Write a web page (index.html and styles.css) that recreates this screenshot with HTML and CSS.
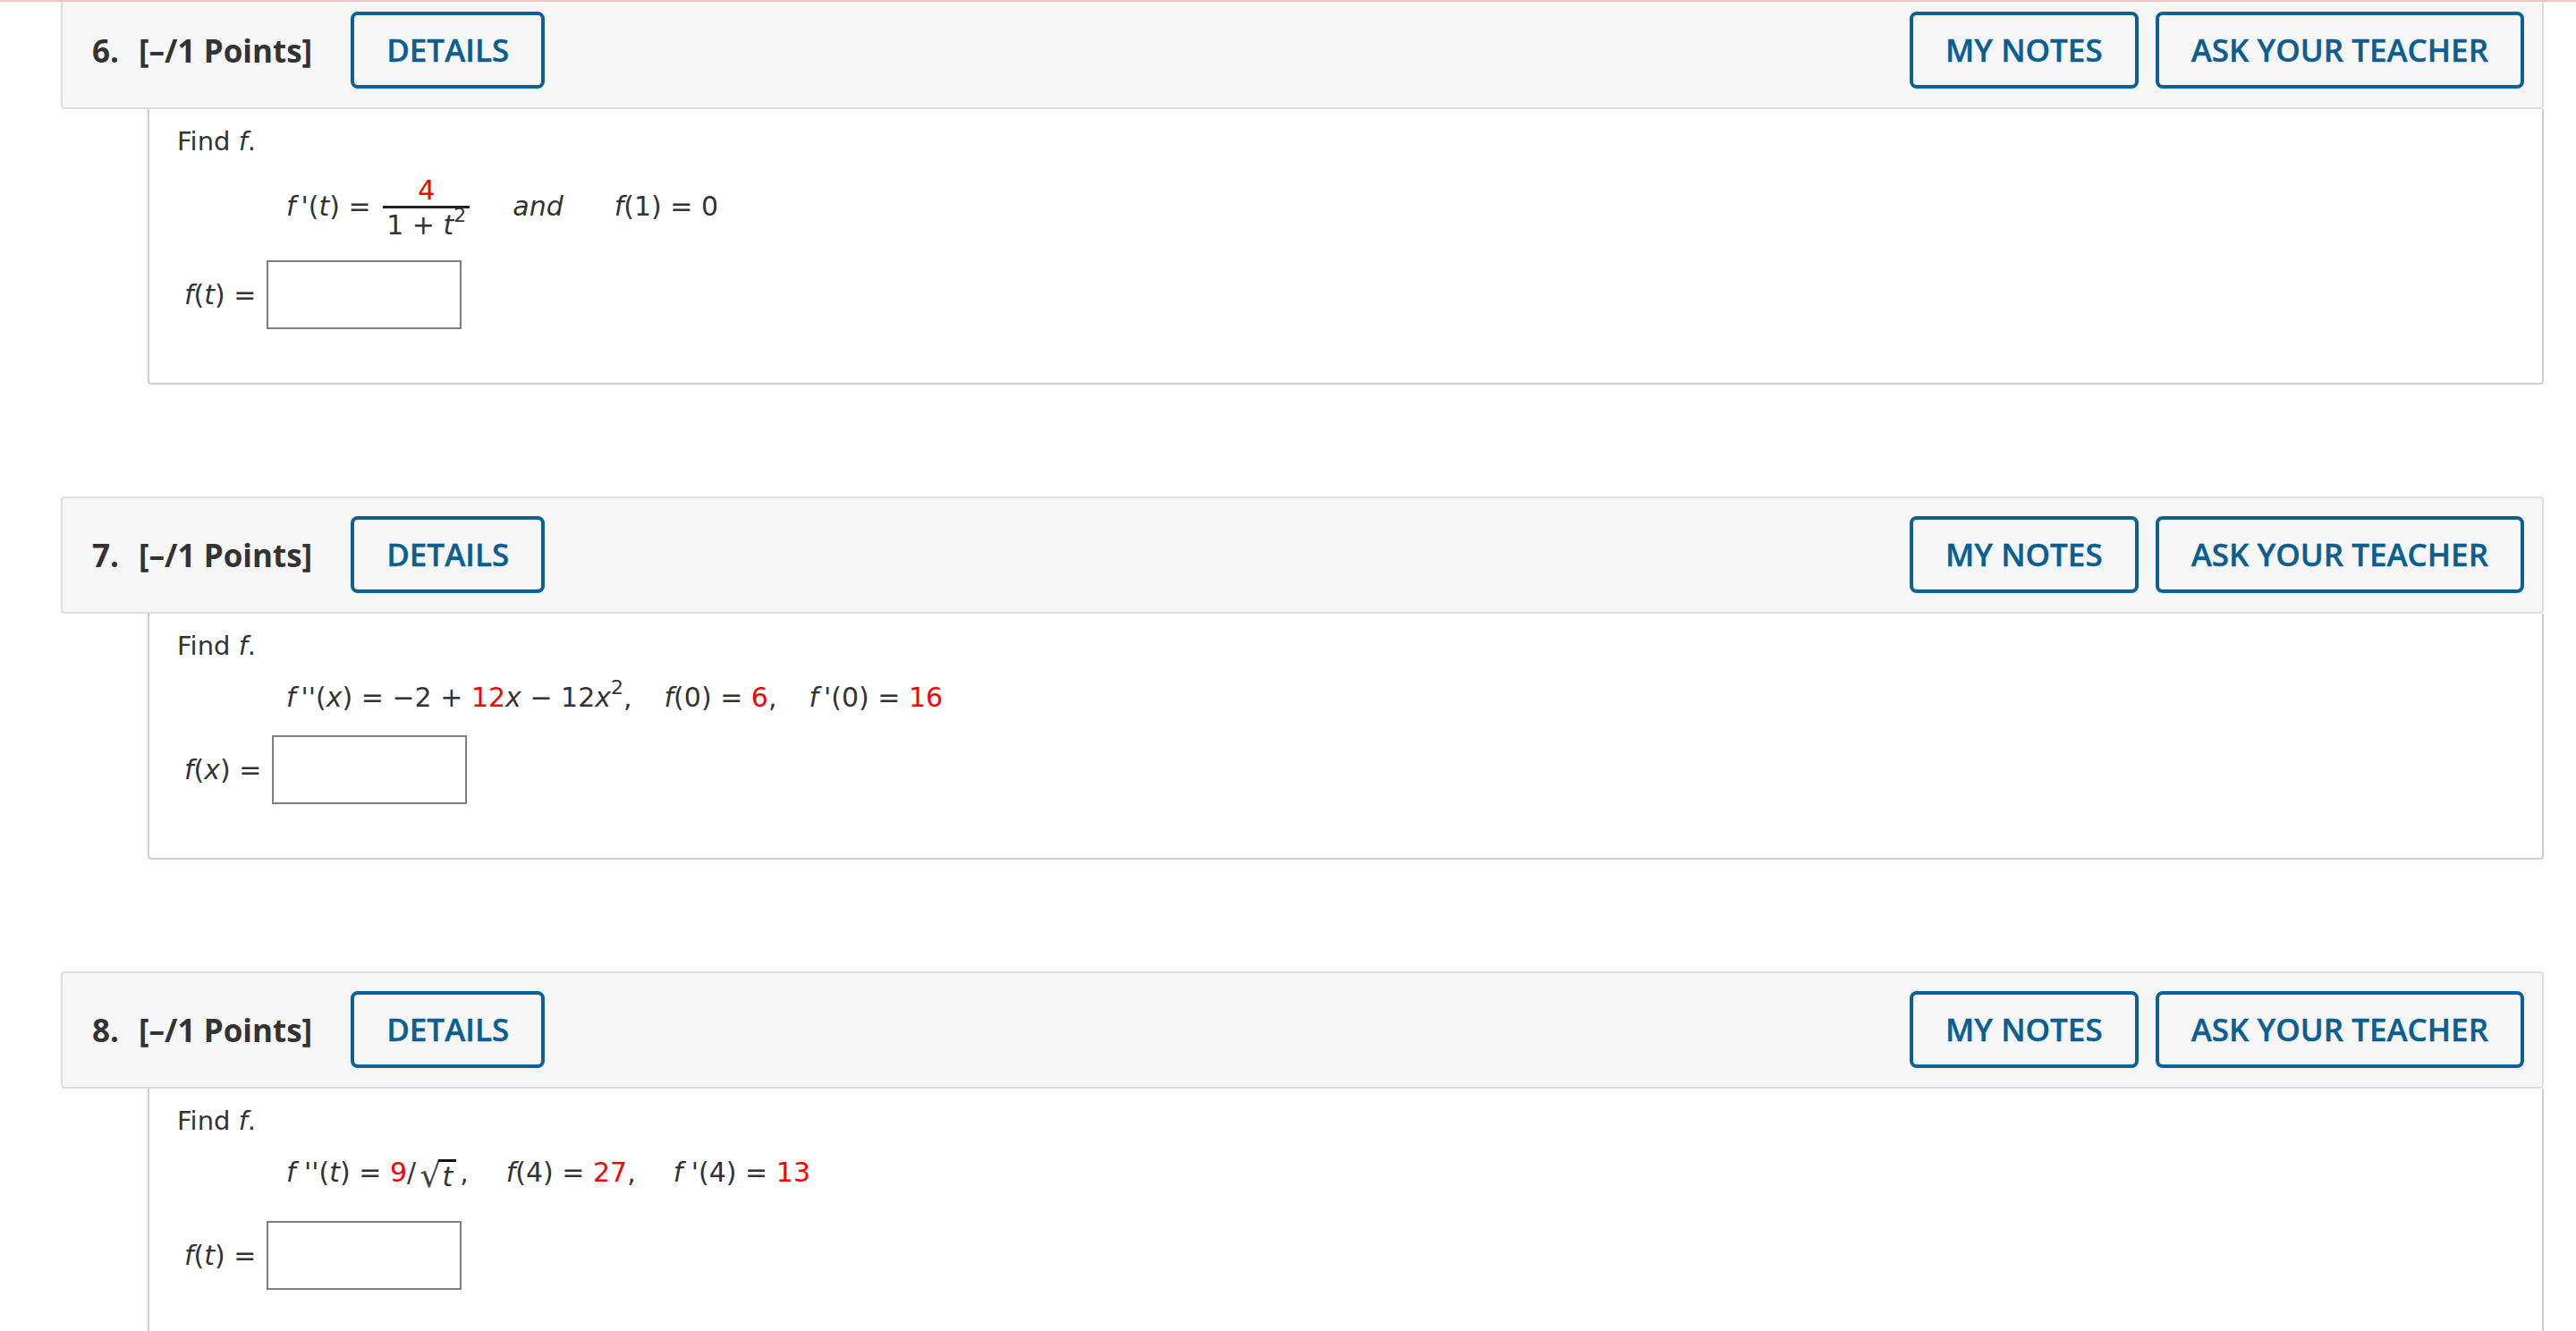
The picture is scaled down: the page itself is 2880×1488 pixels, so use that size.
FILE: index.html
```html
<!DOCTYPE html>
<html lang="en">
<head>
<meta charset="utf-8">
<title>Questions</title>
<link rel="stylesheet" href="styles.css">
</head>
<body>
<div class="topline"></div>
<main class="page">

  <section class="question">
    <div class="q-header">
      <span class="q-title"><span class="q-num">6.</span>[–/1 Points]</span>
      <button class="btn details">DETAILS</button>
      <div class="spacer"></div>
      <button class="btn">MY NOTES</button>
      <button class="btn">ASK YOUR TEACHER</button>
    </div>
    <div class="q-body">
      <p class="prompt">Find <i>f</i>.</p>
      <div class="math"><i>f</i>&thinsp;'(<i>t</i>) = <span class="frac"><span class="num red">4</span><span class="den">1 + <i>t</i><sup>2</sup></span></span><i class="and">and</i><i>f</i>(1) = 0</div>
      <div class="answer"><span class="label"><i>f</i>(<i>t</i>) =</span><span class="input"></span></div>
    </div>
  </section>

  <section class="question">
    <div class="q-header">
      <span class="q-title"><span class="q-num">7.</span>[–/1 Points]</span>
      <button class="btn details">DETAILS</button>
      <div class="spacer"></div>
      <button class="btn">MY NOTES</button>
      <button class="btn">ASK YOUR TEACHER</button>
    </div>
    <div class="q-body">
      <p class="prompt">Find <i>f</i>.</p>
      <div class="math"><i>f</i>&thinsp;''(<i>x</i>) = −2 + <span class="red">12</span><i>x</i> − 12<i>x</i><sup>2</sup>,<span class="gap"></span><i>f</i>(0) = <span class="red">6</span>,<span class="gap"></span><i>f</i>&thinsp;'(0) = <span class="red">16</span></div>
      <div class="answer"><span class="label"><i>f</i>(<i>x</i>) =</span><span class="input"></span></div>
    </div>
  </section>

  <section class="question">
    <div class="q-header">
      <span class="q-title"><span class="q-num">8.</span>[–/1 Points]</span>
      <button class="btn details">DETAILS</button>
      <div class="spacer"></div>
      <button class="btn">MY NOTES</button>
      <button class="btn">ASK YOUR TEACHER</button>
    </div>
    <div class="q-body">
      <p class="prompt">Find <i>f</i>.</p>
      <div class="math tall"><i>f</i> ''(<i>t</i>) = <span class="red">9</span>/<span class="sqrt"><span class="radical">√</span><span class="radicand"><i>t</i></span></span>,<span class="gap wide"></span><i>f</i>(4) = <span class="red">27</span>,<span class="gap wide"></span><i>f</i> '(4) = <span class="red">13</span></div>
      <div class="answer"><span class="label"><i>f</i>(<i>t</i>) =</span><span class="input"></span></div>
    </div>
  </section>

</main>
</body>
</html>
```

FILE: styles.css
```css
html, body {
  margin: 0;
  padding: 0;
  background: #ffffff;
}

body {
  font-family: "DejaVu Sans", Verdana, sans-serif;
  color: #333333;
}

.topline {
  position: fixed;
  top: 0;
  left: 0;
  right: 0;
  height: 2px;
  background: #f1c3cb;
  z-index: 5;
}

.page {
  margin-top: -9px;
  padding: 0 36px 0 68px;
}

.question {
  margin-bottom: 125px;
}

.q-header {
  display: flex;
  align-items: center;
  height: 131px;
  box-sizing: border-box;
  background: #f6f6f6;
  border: 2px solid #dedede;
  border-radius: 4px;
  padding: 0 20px 0 33px;
}

.q-title {
  font-family: "Open Sans", sans-serif;
  font-weight: 700;
  font-size: 35px;
  color: #333333;
  white-space: nowrap;
}

.q-num {
  margin-right: 22px;
}

.spacer {
  flex: 1;
}

.btn {
  height: 86px;
  box-sizing: border-box;
  border: 4px solid #0b6196;
  border-radius: 8px;
  background: transparent;
  padding: 0 36px;
  font-family: "Open Sans", sans-serif;
  font-weight: 600;
  font-size: 35px;
  color: #0a5e92;
  white-space: nowrap;
  margin-top: -2px;
  -webkit-text-stroke: 0.4px #0a5e92;
}

.btn.details {
  margin-left: 43px;
}

.btn + .btn {
  margin-left: 19px;
}

.q-body {
  margin-left: 97px;
  border: 2px solid #cfcfcf;
  border-top: none;
  border-radius: 0 0 4px 4px;
  padding: 16px 31px 60px 31px;
  font-size: 30px;
  line-height: 40px;
}

.prompt {
  margin: 0;
  font-size: 29px;
}

.math {
  margin: 18px 0 22px 122px;
  white-space: nowrap;
}

.math.tall {
  margin-bottom: 30px;
}

.red {
  color: #ff0000;
}

sup {
  font-size: 22px;
  line-height: 0;
  vertical-align: 14px;
}

.frac {
  display: inline-flex;
  flex-direction: column;
  align-items: center;
  vertical-align: middle;
  margin-left: 4px;
  line-height: 34px;
}

.frac .num {
  padding: 0 4px;
}

.frac .den {
  border-top: 3px solid #222222;
  padding: 2px 4px 0;
}

.and {
  margin: 0 57px 0 48px;
}

.gap {
  display: inline-block;
  width: 36px;
}

.gap.wide {
  width: 42px;
}

.sqrt {
  display: inline-flex;
  align-items: flex-end;
  vertical-align: -6px;
  margin: 0 4px 0 4px;
}

.radical {
  font-style: normal;
  font-size: 38px;
  line-height: 42px;
  color: #444444;
}

.radicand {
  border-top: 3px solid #111111;
  line-height: 34px;
  padding: 0 4px 0 4px;
  margin-left: -3px;
  margin-bottom: 2px;
}

.answer {
  display: flex;
  align-items: center;
  padding-left: 8px;
}

.label {
  white-space: nowrap;
}

.input {
  display: inline-block;
  width: 218px;
  height: 77px;
  box-sizing: border-box;
  border: 2px solid #7f7f7f;
  background: #ffffff;
  margin-left: 12px;
}
```
